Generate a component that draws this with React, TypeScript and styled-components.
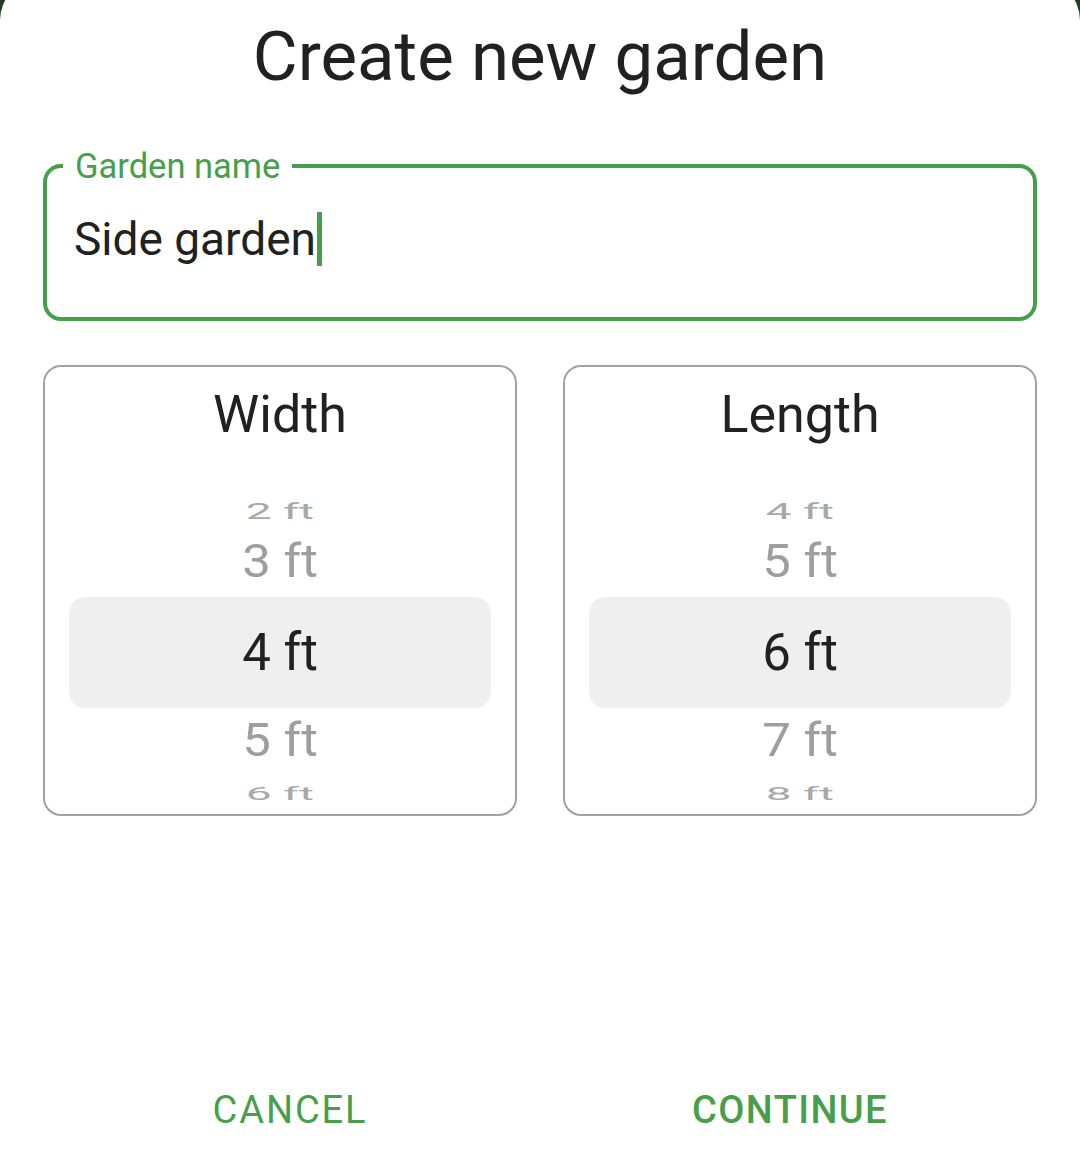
import React from "react";
import styled, { createGlobalStyle } from "styled-components";

const GREEN = "#479f4b";

const Global = createGlobalStyle`
  html, body { margin: 0; padding: 0; background: #1d3d1f; }
  body { font-family: Roboto, "Noto Sans", "Liberation Sans", sans-serif; overflow: hidden; }
  * { box-sizing: border-box; }
`;

const Sheet = styled.div`
  margin-top: -20px;
  min-height: calc(100vh + 20px);
  background: #ffffff;
  border-radius: 40px 40px 0 0;
  padding: 37px 43px 31px;
  display: flex;
  flex-direction: column;
`;

const Title = styled.h1`
  margin: 0;
  font-size: 69px;
  line-height: 80px;
  font-weight: 400;
  color: #212121;
  text-align: center;
`;

const Field = styled.fieldset`
  margin: 49px 0 0;
  padding: 0 16px 51px;
  border: 4px solid ${GREEN};
  border-radius: 18px;
  min-width: 0;
`;

const Legend = styled.legend`
  padding: 0 12px;
  font-size: 34.5px;
  line-height: 40px;
  color: ${GREEN};
`;

const ValueLine = styled.div`
  display: flex;
  align-items: stretch;
  height: 54px;
  margin-top: 26px;
  padding-left: 11px;
  font-size: 46px;
  line-height: 54px;
  color: #212121;
`;

const Caret = styled.span`
  width: 5px;
  margin-left: 1px;
  background: ${GREEN};
`;

const Pickers = styled.div`
  display: grid;
  grid-template-columns: 1fr 1fr;
  gap: 46px;
  margin-top: 44px;
`;

const Card = styled.div`
  border: 2px solid #a2a2a2;
  border-radius: 18px;
  padding-top: 18px;
  display: flex;
  flex-direction: column;
`;

const CardTitle = styled.div`
  font-size: 52px;
  line-height: 60px;
  color: #212121;
  text-align: center;
`;

const Wheel = styled.div`
  margin-top: 51px;
  display: flex;
  flex-direction: column;
`;

type Tone = "active" | "near" | "far";

const Row = styled.div<{ $h: number; $tone: Tone }>`
  height: ${(p) => p.$h}px;
  margin: 0 24px;
  display: flex;
  align-items: center;
  justify-content: center;
  border-radius: 16px;
  background: ${(p) => (p.$tone === "active" ? "#efefef" : "transparent")};
  color: ${(p) => (p.$tone === "active" ? "#212121" : p.$tone === "near" ? "#9e9e9e" : "#a8a8a8")};
`;

const RowText = styled.span<{ $sx: number; $sy: number }>`
  display: inline-block;
  font-size: 51px;
  line-height: 1;
  white-space: pre;
  transform: scale(${(p) => p.$sx}, ${(p) => p.$sy});
`;

const Actions = styled.div`
  margin-top: auto;
  margin-left: -3px;
  margin-right: -3px;
  display: grid;
  grid-template-columns: 1fr 1fr;
`;

const ActionButton = styled.button<{ $strong?: boolean }>`
  border: none;
  background: none;
  padding: 0;
  height: 60px;
  font-family: inherit;
  font-size: 38px;
  line-height: 60px;
  letter-spacing: ${(p) => (p.$strong ? 1.4 : 1.9)}px;
  font-weight: ${(p) => (p.$strong ? 500 : 400)};
  color: ${GREEN};
  text-align: center;
`;

const rows: { h: number; sx: number; sy: number; tone: Tone }[] = [
  { h: 30, sx: 0.9, sy: 0.42, tone: "far" },
  { h: 71, sx: 1, sy: 0.9, tone: "near" },
  { h: 111, sx: 1, sy: 1, tone: "active" },
  { h: 64, sx: 1, sy: 0.9, tone: "near" },
  { h: 42, sx: 0.9, sy: 0.35, tone: "far" },
];

function Picker({ label, start }: { label: string; start: number }) {
  return (
    <Card>
      <CardTitle>{label}</CardTitle>
      <Wheel>
        {rows.map((r, i) => (
          <Row key={i} $h={r.h} $tone={r.tone}>
            <RowText $sx={r.sx} $sy={r.sy}>{`${start + i} ft`}</RowText>
          </Row>
        ))}
      </Wheel>
    </Card>
  );
}

export default function App() {
  return (
    <>
      <Global />
      <Sheet>
        <Title>Create new garden</Title>
        <Field>
          <Legend>Garden name</Legend>
          <ValueLine>
            <span>Side garden</span>
            <Caret />
          </ValueLine>
        </Field>
        <Pickers>
          <Picker label="Width" start={2} />
          <Picker label="Length" start={4} />
        </Pickers>
        <Actions>
          <ActionButton>CANCEL</ActionButton>
          <ActionButton $strong>CONTINUE</ActionButton>
        </Actions>
      </Sheet>
    </>
  );
}
